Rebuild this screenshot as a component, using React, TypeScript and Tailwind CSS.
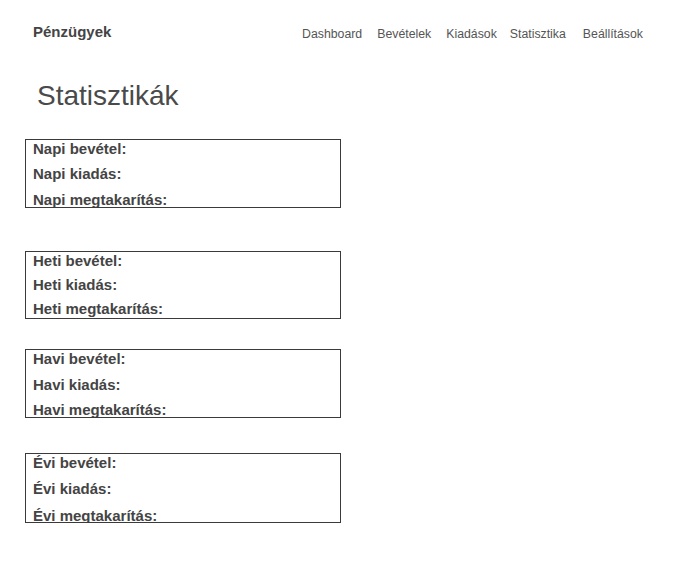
const navItems = [
	{ label: 'Dashboard', cls: '' },
	{ label: 'Bevételek', cls: 'ml-[15px]' },
	{ label: 'Kiadások', cls: 'ml-[15px]' },
	{ label: 'Statisztika', cls: 'ml-[13px]' },
	{ label: 'Beállítások', cls: 'ml-[17px]' },
];

type StatBox = {
	prefix: string;
	height: string;
	margin: string;
	gaps: [string, string];
};

const boxes: StatBox[] = [
	{ prefix: 'Napi', height: 'h-[69px]', margin: 'mt-[27px]', gaps: ['mt-[8px]', 'mt-[9px]'] },
	{ prefix: 'Heti', height: 'h-[68px]', margin: 'mt-[43px]', gaps: ['mt-[7px]', 'mt-[7px]'] },
	{ prefix: 'Havi', height: 'h-[69px]', margin: 'mt-[30px]', gaps: ['mt-[9px]', 'mt-[8px]'] },
	{ prefix: 'Évi', height: 'h-[70px]', margin: 'mt-[35px]', gaps: ['mt-[9px]', 'mt-[10px]'] },
];

export default function App() {
	return (
		<div className="min-h-[571px] bg-white font-['Liberation_Sans',Arial,sans-serif] text-[#444]">
			<header className="flex items-start justify-between pl-[33px] pr-[39px] pt-[23px]">
				<div className="text-[15px] font-bold leading-[17px]">Pénzügyek</div>
				<nav className="mt-[4px] flex text-[12.3px] leading-[14px] text-[#555]">
					{navItems.map((item) => (
						<a key={item.label} href="#" className={`${item.cls} whitespace-nowrap`}>
							{item.label}
						</a>
					))}
				</nav>
			</header>

			<h1 className="ml-[37px] mt-[39px] text-[28px] font-normal leading-[32px] text-[#4a4a4a]">Statisztikák</h1>

			{boxes.map((box) => (
				<section
					key={box.prefix}
					className={`${box.margin} ${box.height} ml-[25px] w-[316px] overflow-hidden border border-[#3a3a3a] pl-[7px] text-[15px] font-bold leading-[17px]`}
				>
					<p>{box.prefix} bevétel:</p>
					<p className={box.gaps[0]}>{box.prefix} kiadás:</p>
					<p className={box.gaps[1]}>{box.prefix} megtakarítás:</p>
				</section>
			))}
		</div>
	);
}
